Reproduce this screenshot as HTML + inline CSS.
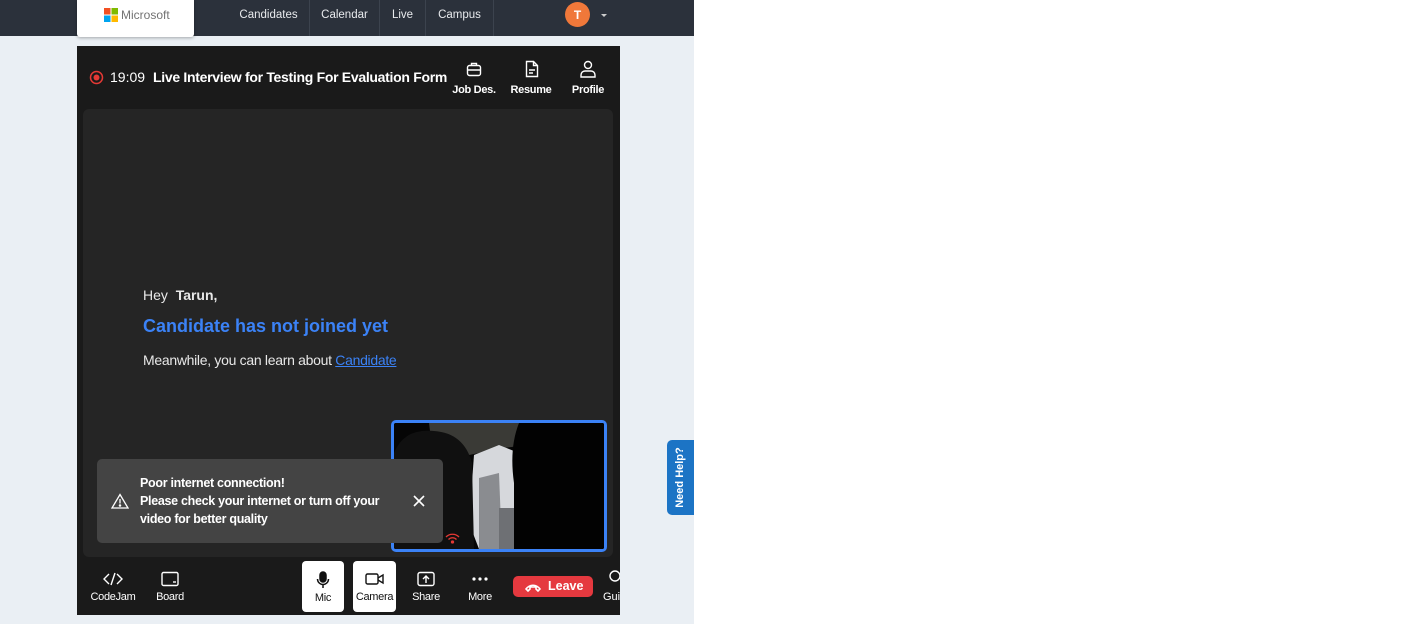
<!DOCTYPE html>
<html><head><meta charset="utf-8"><style>
*{box-sizing:border-box;margin:0;padding:0}
body{width:1428px;height:624px;background:#fff;font-family:"Liberation Sans",Arial,sans-serif;position:relative;overflow:hidden}
.abs{position:absolute}
.side{left:0;top:0;width:694px;height:624px;background:#eaeff4}
.hdr{left:0;top:0;width:694px;height:36px;background:#2b313b}
.logo{left:77px;top:0;width:117px;height:37px;background:#fff;box-shadow:0 1px 3px rgba(0,0,0,.3);border-radius:0 0 3px 3px}
.nav{top:0;height:36px;color:#e8eaed;font-size:11.5px;line-height:14px;padding-top:8px;text-align:center;border-right:1px solid #3c434e}
.panel{left:77px;top:46px;width:543px;height:569px;background:#1a1a1a}
.inner{left:83px;top:109px;width:530px;height:448px;background:#252525;border-radius:6px}
.tb{color:#fff;font-size:11px;text-align:center;font-weight:bold;letter-spacing:-.3px}
.btn{top:561px;height:51px;color:#fff;font-size:11px;text-align:center;letter-spacing:-.3px}
.btn svg{display:block;margin:10px auto 4px}
</style></head><body>
<div class="abs side"></div>
<div class="abs hdr"></div>
<div class="abs logo">
 <svg class="abs" style="left:27px;top:8px" width="14" height="14"><rect width="6.5" height="6.5" fill="#f25022"/><rect x="7.5" width="6.5" height="6.5" fill="#7fba00"/><rect y="7.5" width="6.5" height="6.5" fill="#00a4ef"/><rect x="7.5" y="7.5" width="6.5" height="6.5" fill="#ffb900"/></svg>
 <span class="abs" style="left:44px;top:8px;font-size:12px;color:#737373">Microsoft</span>
</div>
<div class="abs nav" style="left:228px;width:82px">Candidates</div>
<div class="abs nav" style="left:310px;width:70px">Calendar</div>
<div class="abs nav" style="left:380px;width:46px">Live</div>
<div class="abs nav" style="left:426px;width:68px">Campus</div>
<div class="abs" style="left:565px;top:2px;width:25px;height:25px;border-radius:50%;background:#f0783a;color:#fff;font-size:12px;font-weight:bold;text-align:center;line-height:26px">T</div>
<div class="abs" style="left:601px;top:14px;border:3px solid transparent;border-top:3px solid #ccc"></div>

<div class="abs panel"></div>
<svg class="abs" style="left:89px;top:70px" width="15" height="15"><circle cx="7.5" cy="7.5" r="6" fill="none" stroke="#e53935" stroke-width="1.5"/><circle cx="7.5" cy="7.5" r="3" fill="#e53935"/></svg>
<div class="abs" style="left:110px;top:69px;color:#fff;font-size:14px">19:09</div>
<div class="abs" style="left:153px;top:69px;color:#fff;font-size:14px;font-weight:bold;letter-spacing:-.3px">Live Interview for Testing For Evaluation Form</div>
<svg class="abs" style="left:466px;top:61px" width="16" height="16" fill="none" stroke="#fff" stroke-width="1.4"><rect x="1.5" y="4.5" width="13" height="10" rx="2"/><path d="M5.5 4.5V2.5h5v2M1.5 9h13"/></svg>
<div class="abs tb" style="left:449px;top:84px;width:50px">Job Des.</div>
<svg class="abs" style="left:524px;top:60px" width="16" height="18" fill="none" stroke="#fff" stroke-width="1.4"><path d="M2.5 1.5h7l4 4v11h-11z M9.5 1.5v4h4 M5 10h6M5 13h4"/></svg>
<div class="abs tb" style="left:506px;top:84px;width:50px">Resume</div>
<svg class="abs" style="left:579px;top:60px" width="18" height="18" fill="none" stroke="#fff" stroke-width="1.4"><circle cx="9" cy="5" r="3.5"/><path d="M2 17v-2a4 4 0 0 1 4-4h6a4 4 0 0 1 4 4v2z"/></svg>
<div class="abs tb" style="left:563px;top:84px;width:50px">Profile</div>

<div class="abs inner"></div>
<div class="abs" style="left:143px;top:287px;color:#e8e8e8;font-size:14px">Hey&nbsp; <b>Tarun,</b></div>
<div class="abs" style="left:143px;top:316px;color:#3b82f6;font-size:18px;font-weight:bold">Candidate has not joined yet</div>
<div class="abs" style="left:143px;top:352px;color:#e8e8e8;font-size:14px;letter-spacing:-.3px">Meanwhile, you can learn about <span style="color:#3b82f6;text-decoration:underline">Candidate</span></div>

<div class="abs" style="left:391px;top:420px;width:216px;height:132px;border:3px solid #3b82f6;border-radius:5px;background:#050505;overflow:hidden">
<svg width="210" height="126" viewBox="0 0 210 126">
 <rect width="210" height="126" fill="#050505"/>
 <polygon points="35,0 170,0 160,18 110,25 85,30 60,35 40,40" fill="#3a3a36"/>
 <polygon points="80,32 105,22 125,30 130,70 115,126 85,126 75,100" fill="#d6d8dc"/>
 <polygon points="85,55 105,50 108,126 85,126" fill="#8a8c90"/>
 <rect x="105" y="85" width="18" height="41" fill="#6e7074"/>
 <path d="M0 126V30Q10 5 40 8Q70 10 78 40L80 126z" fill="#101010"/>
 <path d="M120 126V60Q115 25 125 0H210V126z" fill="#020202"/>
</svg>
</div>
<svg class="abs" style="left:445px;top:532px" width="15" height="12" fill="none" stroke="#e53935" stroke-width="1.3"><path d="M1 5a9 9 0 0 1 13 0M3.5 7.5a5.5 5.5 0 0 1 8 0"/><circle cx="7.5" cy="10" r="1" fill="#e53935"/></svg>

<div class="abs" style="left:97px;top:459px;width:346px;height:84px;background:#444;border-radius:5px"></div>
<svg class="abs" style="left:111px;top:493px" width="18" height="16" fill="none" stroke="#fff" stroke-width="1.3"><path d="M9 1.5L17 15H1z M9 6v4.5"/><circle cx="9" cy="12.5" r=".6" fill="#fff"/></svg>
<div class="abs" style="left:140px;top:474px;color:#fff;font-size:12.5px;font-weight:bold;line-height:18px;letter-spacing:-.3px">Poor internet connection!<br>Please check your internet or turn off your<br>video for better quality</div>
<svg class="abs" style="left:413px;top:495px" width="12" height="12" stroke="#fff" stroke-width="1.6"><path d="M1 1l10 10M11 1L1 11"/></svg>

<div class="abs btn" style="left:88px;width:50px"><svg width="20" height="16" fill="none" stroke="#fff" stroke-width="1.4"><path d="M6 3L1 8l5 5M14 3l5 5-5 5M12 2L8 14"/></svg>CodeJam</div>
<div class="abs btn" style="left:145px;width:50px"><svg width="18" height="16" fill="none" stroke="#fff" stroke-width="1.4"><rect x="1" y="1.5" width="16" height="13" rx="1.5"/><path d="M12 11h3"/></svg>Board</div>
<div class="abs btn" style="left:302px;width:42px;background:#fff;color:#111;border-radius:4px"><svg width="14" height="18" fill="none" stroke="#111" stroke-width="1.5" style="margin:10px auto 3px"><rect x="4" y="1" width="6" height="10" rx="3" fill="#111"/><path d="M1.5 8a5.5 5.5 0 0 0 11 0M7 13.5V17"/></svg>Mic</div>
<div class="abs btn" style="left:353px;width:43px;background:#fff;color:#111;border-radius:4px"><svg width="20" height="16" fill="none" stroke="#111" stroke-width="1.4"><rect x="1" y="3" width="12" height="10" rx="1.5"/><path d="M13 7l5-3v8l-5-3"/></svg>Camera</div>
<div class="abs btn" style="left:404px;width:44px"><svg width="18" height="16" fill="none" stroke="#fff" stroke-width="1.4"><rect x="1" y="1.5" width="16" height="13" rx="2"/><path d="M9 12V5M6 8l3-3 3 3"/></svg>Share</div>
<div class="abs btn" style="left:458px;width:44px"><svg width="18" height="16" fill="#fff"><circle cx="3" cy="8" r="1.6"/><circle cx="9" cy="8" r="1.6"/><circle cx="15" cy="8" r="1.6"/></svg>More</div>
<div class="abs" style="left:513px;top:576px;width:80px;height:21px;background:#e5393f;border-radius:5px;color:#fff;font-size:12.5px;font-weight:bold;line-height:21px;padding-left:35px">Leave</div>
<svg class="abs" style="left:524px;top:582px" width="18" height="10" fill="none" stroke="#fff" stroke-width="1.6"><path d="M2 7c4-5 10-5 14 0l-2 2-2-2V5H6v2L4 9z"/></svg>
<div class="abs" style="left:603px;top:591px;color:#fff;font-size:11px">Gui</div>
<svg class="abs" style="left:608px;top:570px" width="12" height="16" fill="none" stroke="#fff" stroke-width="1.4"><circle cx="7" cy="6" r="5"/></svg>
<div class="abs" style="left:620px;top:561px;width:20px;height:54px;background:#eaeff4"></div>

<div class="abs" style="left:667px;top:440px;width:27px;height:75px;background:#1c74c5;border-radius:5px 0 0 5px"></div>
<div class="abs" style="left:643px;top:470px;width:75px;height:15px;transform:rotate(-90deg);color:#fff;font-size:11px;font-weight:bold;text-align:center;line-height:15px">Need Help?</div>
</body></html>
